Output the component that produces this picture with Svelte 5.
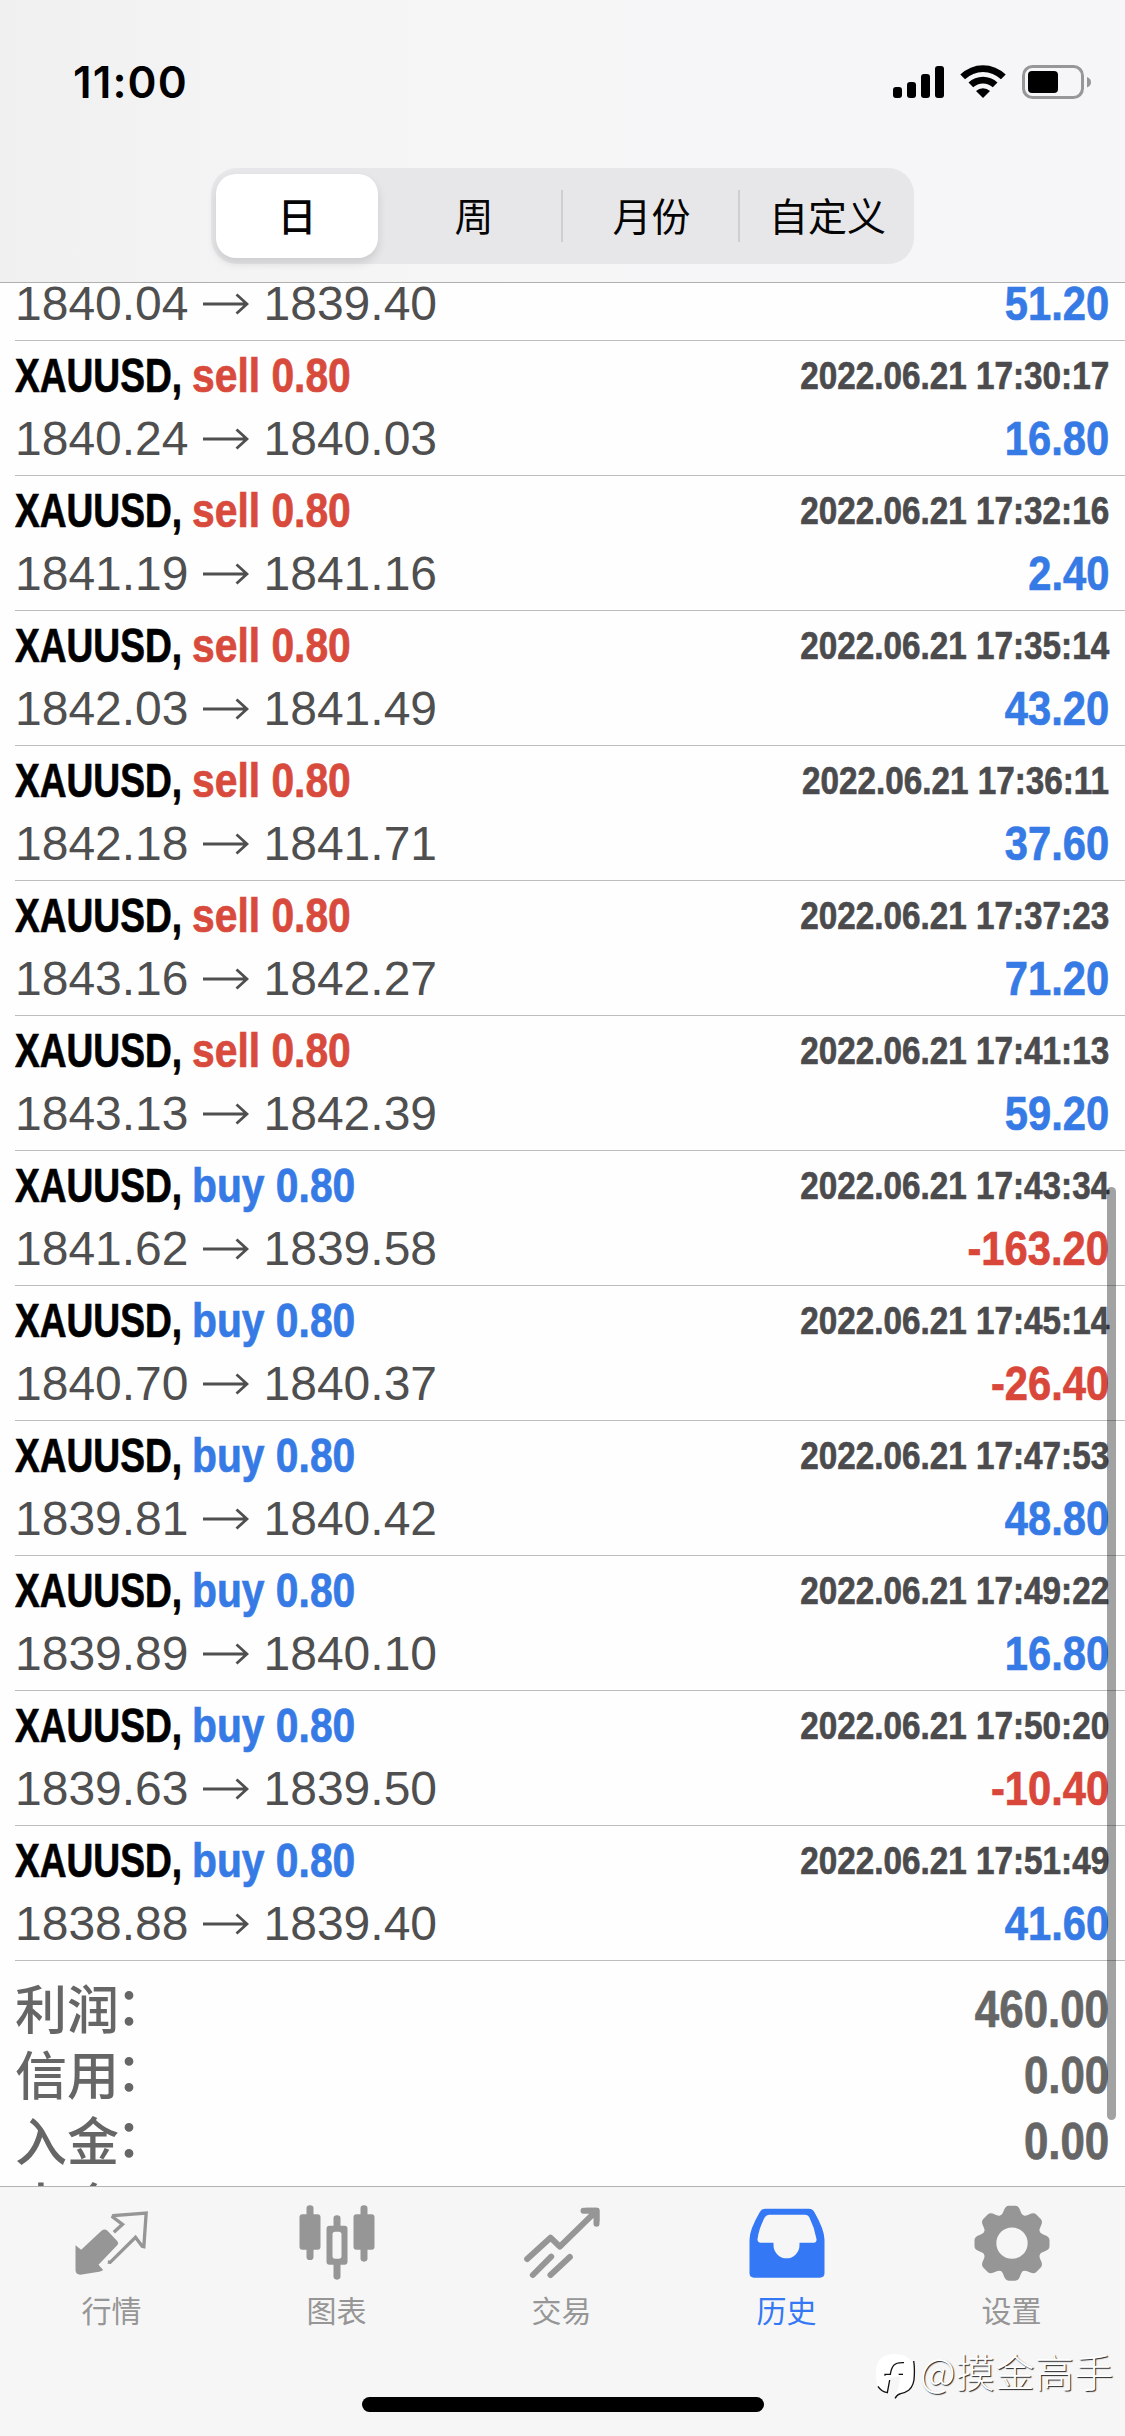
<script>
  const periods = ['日', '周', '月份', '自定义'];

  // The first entry is scrolled halfway under the header, so only its price line shows.
  const deals = [
    ['', '1840.04', '1839.40', '', '51.20'],
    ['sell', '1840.24', '1840.03', '17:30:17', '16.80'],
    ['sell', '1841.19', '1841.16', '17:32:16', '2.40'],
    ['sell', '1842.03', '1841.49', '17:35:14', '43.20'],
    ['sell', '1842.18', '1841.71', '17:36:11', '37.60'],
    ['sell', '1843.16', '1842.27', '17:37:23', '71.20'],
    ['sell', '1843.13', '1842.39', '17:41:13', '59.20'],
    ['buy', '1841.62', '1839.58', '17:43:34', '-163.20'],
    ['buy', '1840.70', '1840.37', '17:45:14', '-26.40'],
    ['buy', '1839.81', '1840.42', '17:47:53', '48.80'],
    ['buy', '1839.89', '1840.10', '17:49:22', '16.80'],
    ['buy', '1839.63', '1839.50', '17:50:20', '-10.40'],
    ['buy', '1838.88', '1839.40', '17:51:49', '41.60']
  ].map(([side, open, close, time, profit]) => ({ side, open, close, time, profit }));

  const totals = [
    ['利润', '460.00'],
    ['信用', '0.00'],
    ['入金', '0.00'],
    ['出金', '']
  ];

  const teeth = [0, 45, 90, 135, 180, 225, 270, 315];
</script>

<div class="screen">
  <header>
    <div class="status">
      <span class="clock">11:00</span>
      <svg class="indicators" viewBox="0 0 200 40" aria-hidden="true">
        <rect x="0" y="25" width="9" height="11" rx="3" />
        <rect x="14" y="20" width="9" height="16" rx="3" />
        <rect x="28" y="12" width="9" height="24" rx="3" />
        <rect x="42" y="4" width="9" height="32" rx="3" />
        <path d="M67.300 12.500A32.500 32.500 0 0 1 112.700 12.500L108 17.300A26 26 0 0 0 72 17.300Z" />
        <path d="M75.500 20.500A21 21 0 0 1 104.500 20.500L99.800 25.300A14.500 14.500 0 0 0 80.200 25.300Z" />
        <path d="M83 29A10.500 10.500 0 0 1 97 29L90 36Z" />
        <rect class="shell" x="130.500" y="4.500" width="59" height="31" rx="9" />
        <rect x="135" y="9" width="30" height="22" rx="4" />
        <path class="nub" d="M194 15q4 1.500 4 5.200t-4 5.200z" />
      </svg>
    </div>
    <nav class="segments">
      {#each periods as period, i}
        <button class:active={i === 0} class:divided={i > 1}>{period}</button>
      {/each}
    </nav>
  </header>

  <main>
    <div class="scroll">
      {#each deals as deal}
        <article class:partial={!deal.side}>
          {#if deal.side}
            <div class="line title">
              <span class="symbol"><b>XAUUSD,</b></span>
              <b class="side {deal.side}">{deal.side} 0.80</b>
              <b class="date">2022.06.21 {deal.time}</b>
            </div>
          {/if}
          <div class="line prices">
            <span>{deal.open}</span>
            <svg class="arrow" viewBox="0 0 46 22" aria-hidden="true"><path d="M0 11H44M33.500 1.500L44 11L33.500 20.500" /></svg>
            <span>{deal.close}</span>
            <b class="profit" class:loss={deal.profit.startsWith('-')}>{deal.profit}</b>
          </div>
        </article>
      {/each}
      <section class="totals">
        {#each totals as [name, value]}
          <div><span>{name}<i>：</i></span><b>{value}</b></div>
        {/each}
      </section>
    </div>
    <i class="thumb"></i>
  </main>

  <footer>
    <nav class="tabs">
      <button>
        <svg viewBox="103.500 70 228 240">
          <path d="M105 197L122 210L183 153Q192 146 201 153L230 184Q236 191 230 197L174 255L188 271Q184 275 176 276L119 285Q106 285 105 272Z" />
          <path class="stroke thin" d="M220 158L246 134L217 112L219 108L317 100L310 201L305 200L285 173L209 248L202 247" />
        </svg>
        <span>行情</span>
      </button>
      <button>
        <svg viewBox="778.500 70 228 240">
          <rect x="777" y="104" width="63" height="106" rx="9" /><rect x="798" y="77" width="21" height="164" rx="10" />
          <rect x="939" y="104" width="63" height="106" rx="9" /><rect x="960" y="77" width="21" height="169" rx="10" />
          <rect x="879" y="107" width="21" height="45" rx="10" /><rect x="879" y="240" width="21" height="60" rx="10" />
          <path fill-rule="evenodd" d="M867 138H912Q921 138 921 147V246Q921 255 912 255H867Q858 255 858 246V147Q858 138 867 138ZM884 156Q876 156 876 164V229Q876 237 884 237H895Q903 237 903 229V164Q903 156 895 156Z" />
        </svg>
        <span>图表</span>
      </button>
      <button>
        <svg viewBox="103.500 70 228 240">
          <path class="stroke" d="M110 238L180 174L208 201L310 101M279 93H318V132M127 286L182 231M180 286L238 232" />
          <path d="M286 84H320Q327 84 327 91V126L316 112L300 96Z" />
        </svg>
        <span>交易</span>
      </button>
      <button class="current">
        <svg viewBox="778.500 70 228 240">
          <path fill-rule="evenodd" d="M825 87H955Q966 87 971 96Q1002 150 1002 180V280Q1002 294 988 294H791Q777 294 777 280V180Q777 150 808 97Q814 87 825 87ZM836 105Q827 105 823 113Q805 146 801 178Q800 189 811 189H849V196A39 40 0 0 0 927 196V189H969Q979 189 978 178Q973 146 957 114Q953 105 943 105Z" />
        </svg>
        <span>历史</span>
      </button>
      <button>
        <svg viewBox="403.500 70 228 240">
          <circle class="ring" cx="514.500" cy="190.500" r="68" />
          {#each teeth as angle}
            <path transform="rotate({angle} 514.500 190.500)" d="M472 112Q485 108 489 95Q494 78 505 78H524Q535 78 540 95Q544 108 557 112L540 130H489Z" />
          {/each}
        </svg>
        <span>设置</span>
      </button>
    </nav>
    <div class="home"></div>
    <div class="watermark">
      <svg viewBox="45 38 120 141" aria-hidden="true">
        <path class="bubble" d="M52 142Q44 128 45 92Q47 42 100 41Q158 42 159 92V118Q156 152 120 158Q108 162 102 174Q104 160 112 146L118 108L88 112L79 156Q62 154 52 142Z" />
        <path class="edge" d="M158 62Q161 78 160 104Q160 136 143 150Q132 158 119 160Q109 162 102 174" />
        <path class="edge" d="M51 138Q60 153 79 157L86 119" />
        <path class="edge" d="M72 106V102H88Q91 83 98 75Q106 66 129 67" />
        <path class="edge" d="M113 102H126" />
      </svg>
      <span>@摸金高手</span>
    </div>
  </footer>
</div>

<style>
  :global(body) { background: #fff; }
  .screen {
    width: 1125px;
    height: 2436px;
    display: flex;
    flex-direction: column;
    overflow: hidden;
    font-family: "Liberation Sans", "Noto Sans CJK SC", sans-serif;
  }
  button {
    border: 0;
    padding: 0;
    margin: 0;
    background: none;
    color: inherit;
    font: inherit;
  }
  header {
    flex: none;
    box-sizing: border-box;
    height: 283px;
    border-bottom: 1px solid #b0b0b1;
    background: linear-gradient(90deg, #f0f0f1 0, #f5f4f4 22%, #f6f6f7 45%, #f6f6f8 100%);
  }
  .status {
    height: 168px;
    display: flex;
    justify-content: space-between;
    padding: 0 32px 0 73px;
    box-sizing: border-box;
  }
  .clock {
    padding-top: 52px;
    font: 600 44px/60px Inter, sans-serif;
    letter-spacing: 1.1px;
  }
  .indicators { width: 200px; height: 40px; margin-top: 62px; }
  .shell { fill: none; stroke: #97979a; stroke-width: 3; }
  .nub { fill: #97979a; }
  .segments {
    display: grid;
    grid-template-columns: 173px 172px 177px 171px;
    width: 703px;
    height: 96px;
    margin: 0 auto;
    box-sizing: border-box;
    padding: 6px 5px;
    border-radius: 26px;
    background: #e7e7e9;
  }
  .segments button {
    display: flex;
    align-items: center;
    justify-content: center;
    padding-bottom: 4px;
    font: 400 39px/60px "Noto Sans CJK SC", sans-serif;
    color: #050505;
  }
  .segments button:nth-child(2) { padding-right: 2px; }
  .segments button:nth-child(3) { padding-left: 4px; }
  .segments button:last-child { padding-left: 8px; white-space: nowrap; }
  .segments .active {
    width: 162px;
    background: #fff;
    border-radius: 20px;
    font-weight: 500;
    box-shadow: 0 5px 10px rgba(0, 0, 0, 0.12);
  }
  .segments .divided {
    background: linear-gradient(#cfcfd2, #cfcfd2) left center / 2px 52px no-repeat;
  }
  main {
    position: relative;
    flex: none;
    height: 1903px;
    overflow: hidden;
    background: #fefefe;
  }
  article {
    height: 135px;
    box-sizing: border-box;
    margin-left: 15px;
    padding: 1px 16px 0 0;
    border-bottom: 1px solid #bdbdbf;
  }
  .partial { height: 66px; margin-top: -8px; padding-top: 0; }
  .line { display: flex; align-items: center; white-space: nowrap; }
  .title { height: 68px; font-size: 48px; line-height: 68px; -webkit-text-stroke: 0.7px; }
  .symbol { width: 177px; }
  .symbol b { display: inline-block; transform: scaleX(0.773); transform-origin: left; }
  .side { transform: scaleX(0.85); transform-origin: left; }
  .sell { color: #d84a3c; }
  .buy { color: #367ae5; }
  .date {
    margin-left: auto;
    font-size: 39px;
    color: #4b4b4d;
    transform: scaleX(0.853);
    transform-origin: right;
  }
  .prices { height: 58px; font-size: 48px; line-height: 58px; color: #4f4f50; }
  .arrow { width: 46px; height: 22px; margin: 0 15px 0 14px; }
  .arrow path { fill: none; stroke: #4f4f50; stroke-width: 2.8; }
  .profit {
    margin-left: auto;
    color: #367ae5;
    -webkit-text-stroke: 0.7px;
    transform: scaleX(0.868);
    transform-origin: right;
  }
  .loss { color: #d9463a; }
  .totals { padding: 16px 16px 0 15px; color: #666; }
  .totals div { display: flex; justify-content: space-between; height: 66px; }
  .totals span { font: 500 52px/60px "Noto Sans CJK SC", sans-serif; }
  .totals i { display: inline-block; font-style: normal; transform: translate(-3px, -4px); }
  .totals b { font-size: 51px; line-height: 66px; -webkit-text-stroke: 0.7px; transform: scaleX(0.86); transform-origin: right; }
  .thumb {
    position: absolute;
    right: 9px;
    top: 904px;
    width: 9px;
    height: 933px;
    border-radius: 5px;
    background: rgba(0, 0, 0, 0.36);
  }
  footer {
    position: relative;
    flex: 1;
    box-sizing: border-box;
    border-top: 1px solid #b3b3b3;
    background: #f6f6f6;
  }
  .tabs { display: grid; grid-template-columns: repeat(5, 1fr); color: #969696; }
  .tabs button { display: flex; flex-direction: column; align-items: center; padding-top: 16px; }
  .tabs svg { width: 76px; height: 80px; fill: currentColor; overflow: visible; }
  .tabs .stroke { fill: none; stroke: currentColor; stroke-width: 18; stroke-linecap: round; stroke-linejoin: round; }
  .tabs .thin { stroke-width: 10; stroke-linecap: butt; stroke-linejoin: miter; }
  .tabs .ring { fill: none; stroke: currentColor; stroke-width: 42; }
  .tabs span { margin: 6px 2px 0 0; font: 400 30px/40px "Noto Sans CJK SC", sans-serif; }
  .current { color: #3478f6; }
  .home { width: 402px; height: 15px; margin: 68px auto 0; border-radius: 8px; background: #000; }
  .watermark {
    position: absolute;
    right: 11px;
    bottom: 38px;
    display: flex;
    align-items: center;
    color: #fff;
    font: 300 39px/56px "Noto Sans CJK SC", sans-serif;
    letter-spacing: 0.5px;
    text-shadow: 1px 1px 1px #222;
  }
  .watermark svg { width: 40px; height: 47px; margin-right: 4px; transform: translateY(6px); }
  .bubble { fill: #fff; }
  .edge { fill: none; stroke: #111; stroke-width: 4; }
</style>
